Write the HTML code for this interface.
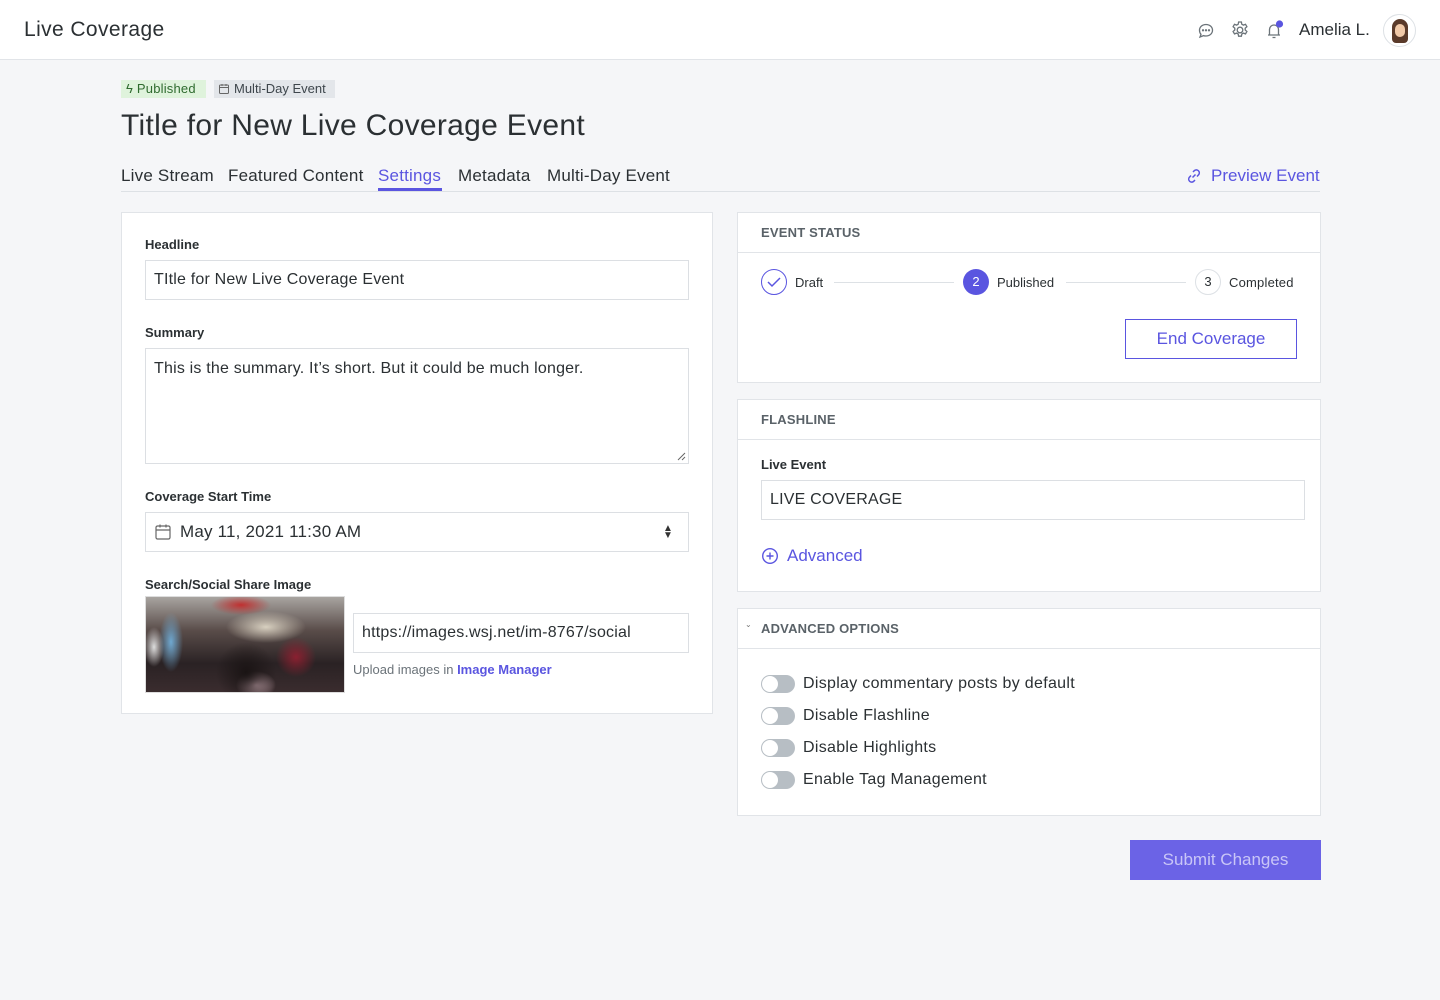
<!DOCTYPE html>
<html><head><meta charset="utf-8"><style>
*{box-sizing:border-box;margin:0;padding:0}
body{width:1440px;height:1000px;background:#f5f6f8;font-family:"Liberation Sans",sans-serif;color:#2b3033;position:relative;overflow:hidden}
.abs{position:absolute}
.hdr{left:0;top:0;width:1440px;height:60px;background:#fff;border-bottom:1px solid #e1e4e8}
.card{background:#fff;border:1px solid #e1e4e8}
.lbl{font-size:13px;font-weight:bold;color:#2b3033}
.inp{border:1px solid #dcdfe3;background:#fff;font-size:16px;padding:0 8px;display:flex;align-items:center;letter-spacing:.2px}
.ch{font-size:13px;font-weight:bold;color:#5a6268;letter-spacing:.2px}
.tog{width:34px;height:18px;border-radius:9px;background:#b7bec4;position:absolute}
.tog:after{content:"";position:absolute;left:1px;top:1px;width:16px;height:16px;border-radius:50%;background:#fff}
.tl{font-size:16px;position:absolute;left:803px;letter-spacing:.3px}
.tab{font-size:17px;letter-spacing:.2px}
</style></head><body>
<div class="abs hdr"></div>
<div class="abs" style="left:24px;top:18px;font-size:21px;color:#2b3033;letter-spacing:.4px">Live Coverage</div>
<svg class="abs" style="left:1197px;top:22px" width="18" height="18" viewBox="0 0 18 18" fill="none" stroke="#6b7379" stroke-width="1.3"><path d="M9 2.5c3.7 0 6.5 2.5 6.5 5.7S12.7 14 9 14c-.9 0-1.7-.1-2.4-.4L3 15l1-2.7C3 11.2 2.5 9.8 2.5 8.2 2.5 5 5.3 2.5 9 2.5z"/><circle cx="6" cy="8.3" r=".5" fill="#6b7379"/><circle cx="9" cy="8.3" r=".5" fill="#6b7379"/><circle cx="12" cy="8.3" r=".5" fill="#6b7379"/></svg>
<svg class="abs" style="left:1230px;top:20px" width="20" height="20" viewBox="0 0 20 20" fill="none" stroke="#6b7379" stroke-width="1.3"><circle cx="10" cy="10" r="2.8"/><path d="M8.6 2h2.8l.4 2.2 1.6.9 2.1-.8 1.4 2.4-1.7 1.5v1.8l1.7 1.5-1.4 2.4-2.1-.8-1.6.9-.4 2.2H8.6l-.4-2.2-1.6-.9-2.1.8-1.4-2.4 1.7-1.5V8.2L3.1 6.7l1.4-2.4 2.1.8 1.6-.9z"/></svg>
<svg class="abs" style="left:1264px;top:19px" width="22" height="22" viewBox="0 0 22 22" fill="none" stroke="#6b7379" stroke-width="1.3"><path d="M4 16h12M5.5 16v-5.5a4.5 4.5 0 0 1 9 0V16M8.5 18.5h3"/><circle cx="15.5" cy="5" r="3.6" fill="#5a55e0" stroke="none"/></svg>
<div class="abs" style="left:1299px;top:20px;font-size:17px;color:#2b3033">Amelia L.</div>
<div class="abs" style="left:1383px;top:14px;width:33px;height:33px;border-radius:50%;border:1px solid #dde1e5;background:#fff;overflow:hidden">
<div style="position:absolute;left:8px;top:4px;width:16px;height:24px;border-radius:8px 8px 4px 4px;background:#5a3a2a"></div>
<div style="position:absolute;left:11px;top:9px;width:10px;height:13px;border-radius:5px;background:#f1c9a8"></div></div>

<div class="abs" style="left:121px;top:80px;width:85px;height:18px;padding:0 0 0 5px;background:#dff3dc;color:#2f6b2f;font-size:13px;line-height:18px;letter-spacing:.2px">ϟ Published</div>
<div class="abs" style="left:214px;top:80px;width:121px;height:18px;padding:0 0 0 4px;background:#e3e6ea;color:#3e464c;font-size:13px;line-height:18px;display:flex;align-items:center"><svg width="12" height="12" viewBox="0 0 12 12" fill="none" stroke="#666" stroke-width="1" style="margin-right:4px"><rect x="1.5" y="2" width="9" height="8.5" rx="1"/><path d="M1.5 4.5h9M4 1v2M8 1v2"/></svg>Multi-Day Event</div>
<div class="abs" style="left:121px;top:109px;font-size:30px;color:#2b3033;letter-spacing:.3px">Title for New Live Coverage Event</div>
<div class="abs" style="left:121px;top:191px;width:1199px;height:1px;background:#dde1e5"></div>
<div class="abs tab" style="left:121px;top:166px">Live Stream</div>
<div class="abs tab" style="left:228px;top:166px">Featured Content</div>
<div class="abs tab" style="left:378px;top:166px;color:#5a55e0">Settings</div>
<div class="abs" style="left:378px;top:188px;width:64px;height:3px;background:#5a55e0"></div>
<div class="abs tab" style="left:458px;top:166px">Metadata</div>
<div class="abs tab" style="left:547px;top:166px">Multi-Day Event</div>
<svg class="abs" style="left:1185px;top:167px" width="18" height="18" viewBox="0 0 18 18" fill="none" stroke="#5a55e0" stroke-width="1.5"><path d="M7.5 10.5l3-3M8 5l1.5-1.5a3 3 0 0 1 4.2 4.2L12 9.5M10 13l-1.5 1.5a3 3 0 0 1-4.2-4.2L6 8.5"/></svg>
<div class="abs" style="left:1211px;top:166px;font-size:17px;color:#5a55e0">Preview Event</div>

<div class="abs card" style="left:121px;top:212px;width:592px;height:502px"></div>
<div class="abs lbl" style="left:145px;top:237px">Headline</div>
<div class="abs inp" style="left:145px;top:260px;width:544px;height:40px">TItle for New Live Coverage Event</div>
<div class="abs lbl" style="left:145px;top:325px">Summary</div>
<div class="abs inp" style="left:145px;top:348px;width:544px;height:116px;align-items:flex-start;padding-top:11px">This is the summary. It’s short. But it could be much longer.</div>
<svg class="abs" style="left:677px;top:452px" width="9" height="9"><path d="M1 8L8 1M5 8L8 5" stroke="#666" stroke-width="1"/></svg>
<div class="abs lbl" style="left:145px;top:489px">Coverage Start Time</div>
<div class="abs inp" style="left:145px;top:512px;width:544px;height:40px;font-size:17px"><svg width="18" height="18" viewBox="0 0 18 18" fill="none" stroke="#666" stroke-width="1.2" style="margin-right:8px"><rect x="2" y="3" width="14" height="13" rx="1.5"/><path d="M2 7h14M6 1.5v3M12 1.5v3"/></svg>May 11, 2021 11:30 AM</div>
<div class="abs" style="left:663px;top:525px;font-size:10px;line-height:7px;color:#333">▲<br>▼</div>
<div class="abs lbl" style="left:145px;top:577px">Search/Social Share Image</div>
<div class="abs" style="left:145px;top:596px;width:200px;height:97px;border:1px solid #ddd;background:
radial-gradient(ellipse 30px 10px at 95px 8px,#c03030,transparent),
radial-gradient(ellipse 40px 16px at 120px 30px,#d8d0c0,transparent),
radial-gradient(ellipse 12px 30px at 25px 45px,#6fa8d0,transparent),
radial-gradient(ellipse 10px 20px at 8px 50px,#ddd,transparent),
radial-gradient(ellipse 30px 30px at 100px 75px,#1a1414,transparent),
radial-gradient(ellipse 20px 20px at 150px 60px,#8a2030,transparent),
radial-gradient(ellipse 20px 14px at 110px 88px,#c8a8b0,transparent),
linear-gradient(180deg,#a8a4a0 0%,#5a4d4a 35%,#2a2224 70%,#3a2c2e 100%)"></div>
<div class="abs inp" style="left:353px;top:613px;width:336px;height:40px;font-size:16px">https://images.wsj.net/im-8767/social</div>
<div class="abs" style="left:353px;top:662px;font-size:13px;color:#6b7379">Upload images in <b style="color:#5a55e0">Image Manager</b></div>

<div class="abs card" style="left:737px;top:212px;width:584px;height:171px"></div>
<div class="abs" style="left:738px;top:252px;width:582px;height:1px;background:#e1e4e8"></div>
<div class="abs ch" style="left:761px;top:225px">EVENT STATUS</div>
<div class="abs" style="left:761px;top:269px;width:26px;height:26px;border-radius:50%;border:1.5px solid #5a55e0"></div>
<svg class="abs" style="left:767px;top:276px" width="14" height="12"><path d="M1 6l4 4 8-8" stroke="#5a55e0" stroke-width="1.5" fill="none"/></svg>
<div class="abs" style="left:795px;top:275px;font-size:13px">Draft</div>
<div class="abs" style="left:834px;top:282px;width:120px;height:1px;background:#dde1e5"></div>
<div class="abs" style="left:963px;top:269px;width:26px;height:26px;border-radius:50%;background:#5a55e0;color:#fff;font-size:13px;text-align:center;line-height:26px">2</div>
<div class="abs" style="left:997px;top:275px;font-size:13px">Published</div>
<div class="abs" style="left:1066px;top:282px;width:120px;height:1px;background:#dde1e5"></div>
<div class="abs" style="left:1195px;top:269px;width:26px;height:26px;border-radius:50%;border:1px solid #dde1e5;font-size:13px;text-align:center;line-height:24px">3</div>
<div class="abs" style="left:1229px;top:275px;font-size:13px;letter-spacing:.2px">Completed</div>
<div class="abs" style="left:1125px;top:319px;width:172px;height:40px;border:1.5px solid #5a55e0;color:#5a55e0;font-size:17px;text-align:center;line-height:37px">End Coverage</div>

<div class="abs card" style="left:737px;top:399px;width:584px;height:193px"></div>
<div class="abs" style="left:738px;top:439px;width:582px;height:1px;background:#e1e4e8"></div>
<div class="abs ch" style="left:761px;top:412px">FLASHLINE</div>
<div class="abs lbl" style="left:761px;top:457px">Live Event</div>
<div class="abs inp" style="left:761px;top:480px;width:544px;height:40px">LIVE COVERAGE</div>
<svg class="abs" style="left:761px;top:547px" width="18" height="18" viewBox="0 0 18 18" fill="none" stroke="#5a55e0" stroke-width="1.4"><circle cx="9" cy="9" r="7.3"/><path d="M9 5.5v7M5.5 9h7"/></svg>
<div class="abs" style="left:787px;top:546px;font-size:17px;color:#5a55e0">Advanced</div>

<div class="abs card" style="left:737px;top:608px;width:584px;height:208px"></div>
<div class="abs" style="left:738px;top:648px;width:582px;height:1px;background:#e1e4e8"></div>
<div class="abs" style="left:745px;top:620px;font-size:8px;color:#777">⌄</div>
<div class="abs ch" style="left:761px;top:621px">ADVANCED OPTIONS</div>
<div class="tog" style="left:761px;top:675px"></div><div class="tl" style="top:675px">Display commentary posts by default</div>
<div class="tog" style="left:761px;top:707px"></div><div class="tl" style="top:707px">Disable Flashline</div>
<div class="tog" style="left:761px;top:739px"></div><div class="tl" style="top:739px">Disable Highlights</div>
<div class="tog" style="left:761px;top:771px"></div><div class="tl" style="top:771px">Enable Tag Management</div>

<div class="abs" style="left:1130px;top:840px;width:191px;height:40px;background:#6b63e6;color:#c9c6f7;font-size:17px;text-align:center;line-height:40px">Submit Changes</div>
</body></html>
